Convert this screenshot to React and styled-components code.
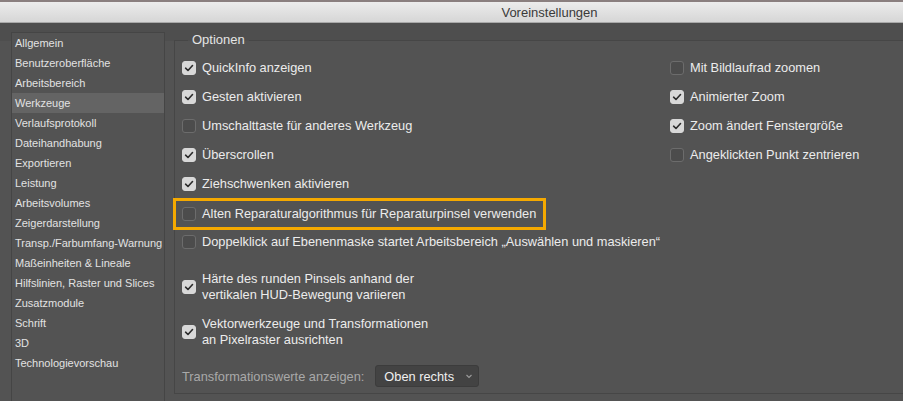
import styled, { createGlobalStyle } from 'styled-components';

const GlobalStyle = createGlobalStyle`
  html, body {
    margin: 0;
    padding: 0;
    background: #535353;
    overflow: hidden;
  }
  body {
    font-family: "Liberation Sans", Arial, sans-serif;
  }
`;

const Window = styled.div`
  width: 903px;
  height: 401px;
  display: flex;
  flex-direction: column;
  background: #535353;
  overflow: hidden;
`;

const TitleBar = styled.div`
  height: 20px;
  flex: none;
  display: flex;
  align-items: center;
  justify-content: center;
  padding-left: 196px;
  border-top: 2px solid #8a7f7f;
  background: linear-gradient(#ececec, #d6d6d6);
  border-bottom: 1px solid #a9a9a9;
  color: #3a3a3a;
  font-size: 13px;
`;

const Body = styled.div`
  flex: 1;
  display: flex;
  padding: 9px 0 0 11px;
  background: linear-gradient(#4e4e4e 0, #4e4e4e 18px, #535353 18px);
`;

const Sidebar = styled.ul`
  list-style: none;
  margin: 0;
  padding: 0;
  width: 152px;
  flex: none;
  border: 1px solid #454545;
  border-bottom: none;
  background: #535353;
`;

const NavItem = styled.li`
  height: 20px;
  line-height: 20px;
  padding-left: 3px;
  font-size: 11px;
  color: #e2e2e2;
  white-space: nowrap;
  background: ${(p) => (p.$active ? '#646464' : 'transparent')};
`;

const Main = styled.div`
  flex: 1;
  padding-left: 9px;
`;

const Group = styled.fieldset`
  margin: 0;
  padding: 5px 0 6px 7px;
  border: 1px solid #464646;
  border-right: none;
  min-width: 0;
`;

const Legend = styled.legend`
  margin-left: 6px;
  padding: 0 4px;
  font-size: 13px;
  line-height: 16px;
  color: #e4e4e4;
`;

const Columns = styled.div`
  display: flex;
`;

const LeftCol = styled.div`
  width: 488px;
  flex: none;
  display: flex;
  flex-direction: column;
`;

const RightCol = styled.div`
  display: flex;
  flex-direction: column;
`;

const Row = styled.div`
  display: flex;
  align-items: center;
  gap: 6px;
  height: ${(p) => p.$h || 29}px;
  margin-top: ${(p) => p.$mt || 0}px;
  white-space: nowrap;
`;

const Highlight = styled.div`
  display: flex;
  align-items: center;
  gap: 6px;
  height: 26px;
  width: 361px;
  margin-left: -9px;
  padding-left: 6px;
  border: 3px solid #f5a900;
  white-space: nowrap;
`;

const Label = styled.span`
  font-size: 12.8px;
  line-height: 16px;
  color: #ececec;
`;

const Box = styled.span`
  flex: none;
  width: 14px;
  height: 14px;
  border-radius: 3px;
  display: flex;
  align-items: center;
  justify-content: center;
  box-sizing: border-box;
  background: ${(p) => (p.$checked ? '#d8d8d8' : '#4c4c4c')};
  border: 1px solid ${(p) => (p.$checked ? '#d8d8d8' : '#6c6c6c')};
`;

const Muted = styled.span`
  font-size: 12.8px;
  color: #a9a9a9;
`;

const Select = styled.div`
  margin-left: 5px;
  width: 104px;
  height: 22px;
  box-sizing: border-box;
  display: flex;
  align-items: center;
  justify-content: space-between;
  padding: 0 5px 0 8px;
  background: #434343;
  border: 1px solid #3c3c3c;
  border-radius: 3px;
  font-size: 12.8px;
  color: #f0f0f0;
`;

function Check({ on }) {
  return (
    <Box $checked={on}>
      {on && (
        <svg width="10" height="10" viewBox="0 0 10 10">
          <polyline points="1.6,5.2 4,7.5 8.5,2.5" fill="none" stroke="#2b2b2b" strokeWidth="1.6" strokeLinecap="round" strokeLinejoin="round" />
        </svg>
      )}
    </Box>
  );
}

const navItems = [
  'Allgemein',
  'Benutzeroberfläche',
  'Arbeitsbereich',
  'Werkzeuge',
  'Verlaufsprotokoll',
  'Dateihandhabung',
  'Exportieren',
  'Leistung',
  'Arbeitsvolumes',
  'Zeigerdarstellung',
  'Transp./Farbumfang-Warnung',
  'Maßeinheiten & Lineale',
  'Hilfslinien, Raster und Slices',
  'Zusatzmodule',
  'Schrift',
  '3D',
  'Technologievorschau',
];

const leftTop = [
  ['QuickInfo anzeigen', true],
  ['Gesten aktivieren', true],
  ['Umschalttaste für anderes Werkzeug', false],
  ['Überscrollen', true],
  ['Ziehschwenken aktivieren', true],
];

const rightTop = [
  ['Mit Bildlaufrad zoomen', false],
  ['Animierter Zoom', true],
  ['Zoom ändert Fenstergröße', true],
  ['Angeklickten Punkt zentrieren', false],
];

export default function App() {
  return (
    <>
      <GlobalStyle />
      <Window>
        <TitleBar>Voreinstellungen</TitleBar>
        <Body>
          <Sidebar>
            {navItems.map((n) => (
              <NavItem key={n} $active={n === 'Werkzeuge'}>{n}</NavItem>
            ))}
          </Sidebar>
          <Main>
            <Group>
              <Legend>Optionen</Legend>
              <Columns>
                <LeftCol>
                  {leftTop.map(([t, on]) => (
                    <Row key={t}>
                      <Check on={on} />
                      <Label>{t}</Label>
                    </Row>
                  ))}
                  <Highlight>
                    <Check on={false} />
                    <Label>Alten Reparaturalgorithmus für Reparaturpinsel verwenden</Label>
                  </Highlight>
                  <Row $h={24}>
                    <Check on={false} />
                    <Label>Doppelklick auf Ebenenmaske startet Arbeitsbereich „Auswählen und maskieren“</Label>
                  </Row>
                  <Row $h={32} $mt={17}>
                    <Check on />
                    <Label>
                      Härte des runden Pinsels anhand der
                      <br />
                      vertikalen HUD-Bewegung variieren
                    </Label>
                  </Row>
                  <Row $h={32} $mt={13}>
                    <Check on />
                    <Label>
                      Vektorwerkzeuge und Transformationen
                      <br />
                      an Pixelraster ausrichten
                    </Label>
                  </Row>
                  <Row $h={22} $mt={17}>
                    <Muted>Transformationswerte anzeigen:</Muted>
                    <Select>
                      <span>Oben rechts</span>
                      <svg width="8" height="8" viewBox="0 0 8 8">
                        <polyline points="1.5,3 4,5.5 6.5,3" fill="none" stroke="#9a9a9a" strokeWidth="1.2" />
                      </svg>
                    </Select>
                  </Row>
                </LeftCol>
                <RightCol>
                  {rightTop.map(([t, on]) => (
                    <Row key={t}>
                      <Check on={on} />
                      <Label>{t}</Label>
                    </Row>
                  ))}
                </RightCol>
              </Columns>
            </Group>
          </Main>
        </Body>
      </Window>
    </>
  );
}
